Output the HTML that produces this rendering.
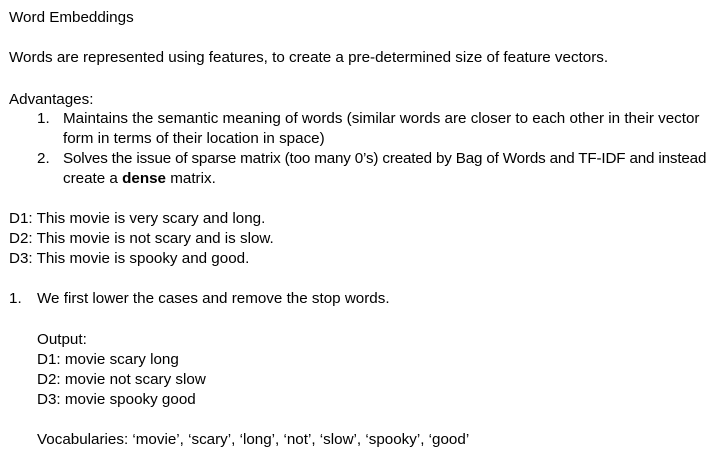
<!DOCTYPE html>
<html><head><meta charset="utf-8"><style>
body{margin:0;width:726px;height:462px;background:#fff;position:relative;overflow:hidden;font-family:"Liberation Sans",sans-serif;font-size:15.2px;color:#000}
div{position:absolute;white-space:nowrap;line-height:20px;margin-top:1px}
</style></head><body>
<div style="left:9px;top:7px">Word Embeddings</div>
<div style="left:9px;top:47px">Words are represented using features, to create a pre-determined size of feature vectors.</div>
<div style="left:9px;top:89px">Advantages:</div>
<div style="left:37px;top:108px">1.</div>
<div style="left:63px;top:108px">Maintains the semantic meaning of words (similar words are closer to each other in their vector</div>
<div style="left:63px;top:128px">form in terms of their location in space)</div>
<div style="left:37px;top:148px">2.</div>
<div style="left:63px;top:148px;letter-spacing:-0.16px">Solves the issue of sparse matrix (too many 0’s) created by Bag of Words and TF-IDF and instead</div>
<div style="left:63px;top:168px">create a <b>dense</b> matrix.</div>
<div style="left:9px;top:208px">D1: This movie is very scary and long.</div>
<div style="left:9px;top:228px">D2: This movie is not scary and is slow.</div>
<div style="left:9px;top:248px">D3: This movie is spooky and good.</div>
<div style="left:9px;top:288px">1.</div>
<div style="left:37px;top:288px">We first lower the cases and remove the stop words.</div>
<div style="left:37px;top:329px">Output:</div>
<div style="left:37px;top:349px">D1: movie scary long</div>
<div style="left:37px;top:369px">D2: movie not scary slow</div>
<div style="left:37px;top:389px">D3: movie spooky good</div>
<div style="left:37px;top:429px">Vocabularies: ‘movie’, ‘scary’, ‘long’, ‘not’, ‘slow’, ‘spooky’, ‘good’</div>
</body></html>
